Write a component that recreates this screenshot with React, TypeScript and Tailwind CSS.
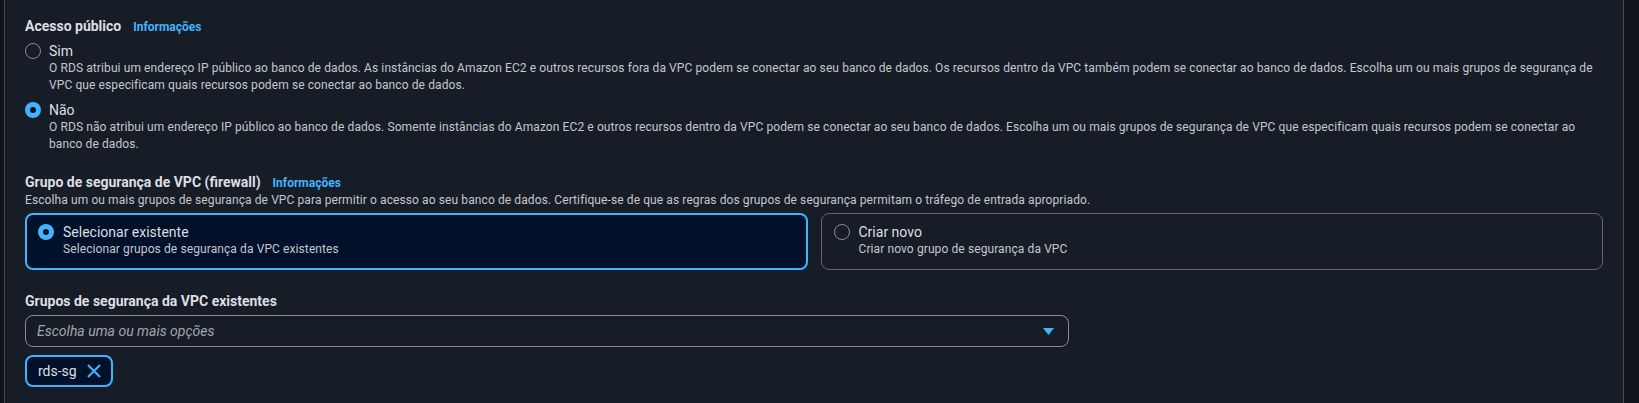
import React from 'react';

// Radio dot used in the option rows and the tiles
function Radio({ checked }: { checked: boolean }) {
  if (checked) {
    return (
      <span className="flex h-[16px] w-[16px] shrink-0 items-center justify-center rounded-full bg-[#42b4ff]">
        <span className="h-[6px] w-[6px] rounded-full bg-[#0f141a]" />
      </span>
    );
  }
  return <span className="h-[16px] w-[16px] shrink-0 rounded-full border-[1.5px] border-[#8c8c94]" />;
}

function InfoLink() {
  return <span className="ml-[12px] text-[12px] font-bold text-[#42b4ff]">Informações</span>;
}

function Heading({ children }: { children: React.ReactNode }) {
  return (
    <div className="flex items-baseline leading-[18px]">
      <span className="text-[14px] font-bold text-[#dedee3]">{children}</span>
    </div>
  );
}

function Option({ checked, label, lines }: { checked: boolean; label: string; lines: string[] }) {
  return (
    <div className="flex flex-col">
      <div className="flex items-center gap-[8px] leading-[18px]">
        <Radio checked={checked} />
        <span className="text-[14px] text-[#dedee3]">{label}</span>
      </div>
      <div className="pl-[24px] text-[12px] leading-[17px] tracking-[0.1px] text-[#c6c6cd]">
        {lines.map((l) => (
          <div key={l} className="whitespace-nowrap">{l}</div>
        ))}
      </div>
    </div>
  );
}

function Tile({ checked, label, desc }: { checked: boolean; label: string; desc: string }) {
  return (
    <div
      className={
        checked
          ? 'flex h-[57px] flex-col rounded-[8px] border-2 border-[#42b4ff] bg-[#001129] pl-[11px] pt-[8px]'
          : 'flex h-[57px] flex-col rounded-[8px] border border-[#656871] pl-[12px] pt-[9px]'
      }
    >
      <div className="flex items-center gap-[9px] leading-[18px]">
        <Radio checked={checked} />
        <span className="text-[14px] text-[#dedee3]">{label}</span>
      </div>
      <div className="pl-[25px] text-[12px] leading-[17px] tracking-[0.1px] text-[#c6c6cd]">{desc}</div>
    </div>
  );
}

export default function App() {
  return (
    <div
      className="flex h-[403px] w-full bg-[#10151c]"
      style={{ fontFamily: 'Roboto, "Noto Sans", sans-serif' }}
    >
      <div className="ml-[4px] w-[1620px] border-x border-[#424650] bg-[#161d26] pl-[20px] pr-[20px] pt-[17px]">
        <div className="flex items-baseline leading-[18px]">
          <span className="text-[14px] font-bold text-[#dedee3]">Acesso público</span>
          <InfoLink />
        </div>

        <div className="mt-[6px] flex flex-col gap-[7px]">
          <Option
            checked={false}
            label="Sim"
            lines={[
              'O RDS atribui um endereço IP público ao banco de dados. As instâncias do Amazon EC2 e outros recursos fora da VPC podem se conectar ao seu banco de dados. Os recursos dentro da VPC também podem se conectar ao banco de dados. Escolha um ou mais grupos de segurança de',
              'VPC que especificam quais recursos podem se conectar ao banco de dados.',
            ]}
          />
          <Option
            checked={true}
            label="Não"
            lines={[
              'O RDS não atribui um endereço IP público ao banco de dados. Somente instâncias do Amazon EC2 e outros recursos dentro da VPC podem se conectar ao seu banco de dados. Escolha um ou mais grupos de segurança de VPC que especificam quais recursos podem se conectar ao',
              'banco de dados.',
            ]}
          />
        </div>

        <div className="mt-[20px] flex items-baseline leading-[18px]">
          <span className="text-[14px] font-bold text-[#dedee3]">Grupo de segurança de VPC (firewall)</span>
          <InfoLink />
        </div>
        <div className="text-[12px] leading-[17px] tracking-[0.1px] text-[#c6c6cd]">
          Escolha um ou mais grupos de segurança de VPC para permitir o acesso ao seu banco de dados. Certifique-se de que as regras dos grupos de segurança permitam o tráfego de entrada apropriado.
        </div>

        <div className="mt-[4px] grid grid-cols-2 gap-[13px]">
          <Tile checked={true} label="Selecionar existente" desc="Selecionar grupos de segurança da VPC existentes" />
          <Tile checked={false} label="Criar novo" desc="Criar novo grupo de segurança da VPC" />
        </div>

        <div className="mt-[22px]">
          <Heading>Grupos de segurança da VPC existentes</Heading>
        </div>

        <div className="mt-[5px] flex h-[32px] w-[1044px] items-center justify-between rounded-[8px] border border-[#8c8c94] pl-[11px] pr-[14px]">
          <span className="text-[14px] italic text-[#a4a4ad]">Escolha uma ou mais opções</span>
          <svg width="11" height="7" viewBox="0 0 11 7">
            <path d="M0 0 H11 L5.5 7 Z" fill="#42b4ff" />
          </svg>
        </div>

        <div className="mt-[8px] flex h-[32px] w-[88px] items-center gap-[10px] rounded-[8px] border-2 border-[#42b4ff] bg-[#001129] pl-[11px]">
          <span className="text-[14px] text-[#dedee3]">rds-sg</span>
          <svg width="14" height="14" viewBox="0 0 14 14" fill="none" stroke="#42b4ff" strokeWidth="2">
            <path d="M1 1 L13 13 M13 1 L1 13" />
          </svg>
        </div>
      </div>
    </div>
  );
}
